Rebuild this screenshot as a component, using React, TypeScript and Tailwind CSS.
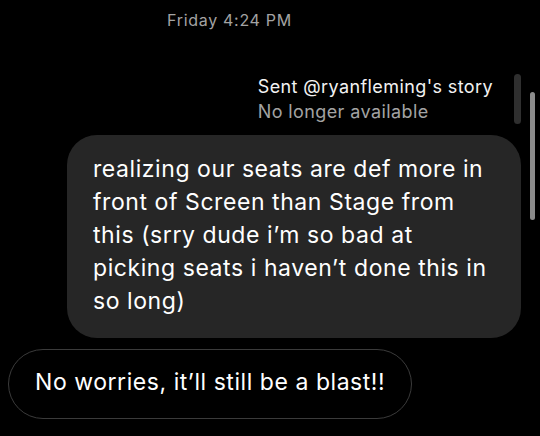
export default function App() {
  return (
    <div
      className="relative h-[436px] w-[540px] overflow-hidden bg-black text-white"
      style={{ fontFamily: "Inter, 'Noto Sans', sans-serif" }}
    >
      <div className="pl-[167px] pt-[10px] text-[16px] leading-[20px] tracking-[0.7px] text-[#a3a3a3]">
        Friday 4:24 PM
      </div>

      <div className="mt-[44px] flex justify-end pr-[19px]">
        <div className="flex items-stretch gap-[21px]">
          <div className="text-[18px] leading-[25px] tracking-[0.4px]">
            <div className="text-[#f2f2f2]">Sent @ryanfleming's story</div>
            <div className="text-[#a3a3a3]">No longer available</div>
          </div>
          <div className="w-[7px] rounded-full bg-[#2f2f2f]" />
        </div>
      </div>

      <div className="mt-[11px] flex justify-end pr-[19px]">
        <div className="w-[454px] rounded-[30px] bg-[#262626] pb-[20px] pl-[26px] pr-[26px] pt-[18px] text-[23px] leading-[33px] tracking-[0.57px]">
          realizing our seats are def more in front of Screen than Stage from this (srry dude i’m so bad at picking
          seats i haven’t done this in so long)
        </div>
      </div>

      <div className="mt-[11px] pl-[8px]">
        <div className="inline-flex h-[70px] items-center rounded-full border border-[#3b3b3b] px-[26px] pb-[4px] text-[23px] leading-[28px] tracking-[0.55px]">
          No worries, it’ll still be a blast!!
        </div>
      </div>

      <div className="absolute left-[530px] top-[92px] h-[128px] w-[5px] rounded-full bg-[#8c8c8c]" />
    </div>
  );
}
